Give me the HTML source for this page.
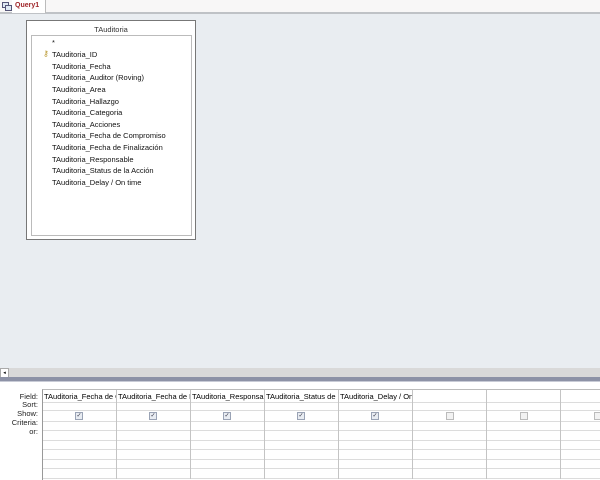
<!DOCTYPE html><html><head><style>
body{margin:0;width:600px;height:479px;overflow:hidden;background:#fff;font-family:"Liberation Sans",sans-serif;font-size:7.5px;position:relative}
.a{position:absolute}
.row{position:absolute;left:52px;font-size:7.5px;color:#111}
.lbl{position:absolute;right:562px;font-size:7.5px;color:#222}
.cb{position:absolute;width:6px;height:6px;border:1px solid #9aa3b5;background:#e8ecf2;font-size:6px;line-height:6px;text-align:center;color:#334}
</style></head><body>
<div class="a" style="left:0;top:0;width:600px;height:12px;background:#f8f7f7"></div>
<div class="a" style="left:0;top:12px;width:600px;height:2px;background:#bfc2c6"></div>
<div class="a" style="left:12px;top:0;width:33px;height:13px;background:#fff;border-right:1px solid #bbb"></div>
<svg class="a" style="left:2px;top:2px" width="10" height="9"><rect x="0.5" y="0.5" width="6" height="5" fill="#dfe8f2" stroke="#557"/><rect x="3.5" y="3.5" width="6" height="5" fill="#dfe8f2" stroke="#557"/></svg>
<div class="a" style="left:15px;top:2px;color:#a0262a;font-size:7px;font-weight:bold">Query1</div>
<div class="a" style="left:0;top:14px;width:600px;height:354px;background:#e9edf1"></div>
<div class="a" style="left:26px;top:20px;width:168px;height:218px;background:#fff;border:1px solid #777"></div>
<div class="a" style="left:26px;top:25px;width:170px;text-align:center;color:#333">TAuditoria</div>
<div class="a" style="left:31px;top:35px;width:159px;height:199px;border:1px solid #bbb"></div>
<div class="row" style="top:38px">*</div>
<div class="a" style="left:43px;top:49px;color:#b8962a;font-size:8px">&#x26B7;</div>
<div class="row" style="top:50px">TAuditoria_ID</div>
<div class="row" style="top:62px">TAuditoria_Fecha</div>
<div class="row" style="top:73px">TAuditoria_Auditor (Roving)</div>
<div class="row" style="top:85px">TAuditoria_Area</div>
<div class="row" style="top:97px">TAuditoria_Hallazgo</div>
<div class="row" style="top:108px">TAuditoria_Categoria</div>
<div class="row" style="top:120px">TAuditoria_Acciones</div>
<div class="row" style="top:131px">TAuditoria_Fecha de Compromiso</div>
<div class="row" style="top:143px">TAuditoria_Fecha de Finalización</div>
<div class="row" style="top:155px">TAuditoria_Responsable</div>
<div class="row" style="top:166px">TAuditoria_Status de la Acción</div>
<div class="row" style="top:178px">TAuditoria_Delay / On time</div>
<div class="a" style="left:0;top:368px;width:600px;height:9px;background:#d9d9d9"></div>
<div class="a" style="left:0;top:368px;width:7px;height:8px;background:#fff;border:1px solid #aaa;font-size:5px;line-height:8px;text-align:center">◂</div>
<div class="a" style="left:0;top:377px;width:600px;height:4px;background:#8d92a6"></div>
<div class="a" style="left:0;top:381px;width:600px;height:1px;background:#c8cbd6"></div>
<div class="a" style="left:42px;top:389px;width:558px;height:90px;border-left:1px solid #999;border-top:1px solid #bbb"></div>
<svg class="a" style="left:43px;top:390px" width="557" height="89">
<g stroke="#dcdcdc">
<line x1="0" y1="12.5" x2="557" y2="12.5"/><line x1="0" y1="20.5" x2="557" y2="20.5"/><line x1="0" y1="31.5" x2="557" y2="31.5"/><line x1="0" y1="40.5" x2="557" y2="40.5"/><line x1="0" y1="50.5" x2="557" y2="50.5"/><line x1="0" y1="59.5" x2="557" y2="59.5"/><line x1="0" y1="69.5" x2="557" y2="69.5"/><line x1="0" y1="78.5" x2="557" y2="78.5"/><line x1="0" y1="88.5" x2="557" y2="88.5"/></g>
<g stroke="#c4c4c4"><line x1="73.5" y1="0" x2="73.5" y2="89"/><line x1="147.5" y1="0" x2="147.5" y2="89"/><line x1="221.5" y1="0" x2="221.5" y2="89"/><line x1="295.5" y1="0" x2="295.5" y2="89"/><line x1="369.5" y1="0" x2="369.5" y2="89"/><line x1="443.5" y1="0" x2="443.5" y2="89"/><line x1="517.5" y1="0" x2="517.5" y2="89"/></g></svg>
<div class="lbl" style="top:392px">Field:</div>
<div class="lbl" style="top:400px">Sort:</div>
<div class="lbl" style="top:409px">Show:</div>
<div class="lbl" style="top:418px">Criteria:</div>
<div class="lbl" style="top:427px">or:</div>
<div class="a" style="left:44px;top:392px;width:72px;overflow:hidden;white-space:nowrap">TAuditoria_Fecha de Compromiso</div>
<div class="a" style="left:118px;top:392px;width:72px;overflow:hidden;white-space:nowrap">TAuditoria_Fecha de Finalización</div>
<div class="a" style="left:192px;top:392px;width:72px;overflow:hidden;white-space:nowrap">TAuditoria_Responsable</div>
<div class="a" style="left:266px;top:392px;width:72px;overflow:hidden;white-space:nowrap">TAuditoria_Status de la Acción</div>
<div class="a" style="left:340px;top:392px;width:72px;overflow:hidden;white-space:nowrap">TAuditoria_Delay / On time</div>
<div class="cb" style="left:75px;top:412px">✓</div>
<div class="cb" style="left:149px;top:412px">✓</div>
<div class="cb" style="left:223px;top:412px">✓</div>
<div class="cb" style="left:297px;top:412px">✓</div>
<div class="cb" style="left:371px;top:412px">✓</div>
<div class="cb" style="left:446px;top:412px;background:#f2f2f2;border-color:#bbb"></div>
<div class="cb" style="left:520px;top:412px;background:#f2f2f2;border-color:#bbb"></div>
<div class="cb" style="left:594px;top:412px;background:#f2f2f2;border-color:#bbb"></div>
</body></html>
